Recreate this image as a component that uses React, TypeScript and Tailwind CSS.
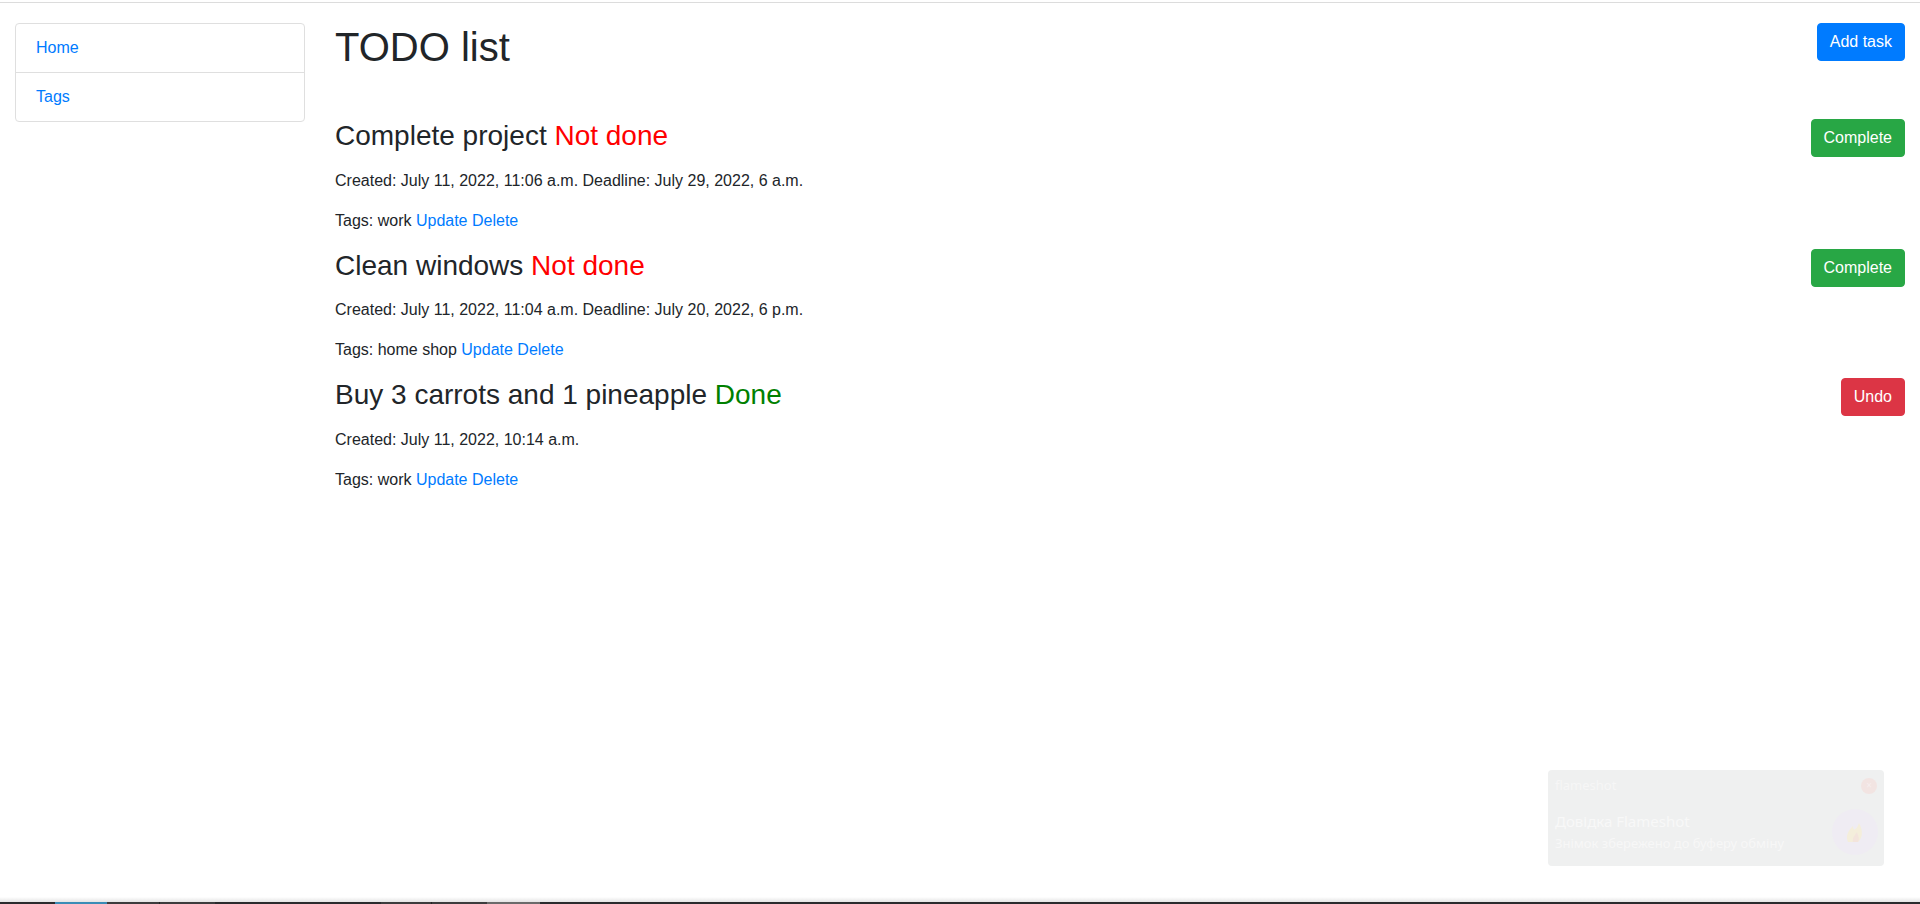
import { useState } from "react";

type Task = {
  id: number;
  title: string;
  done: boolean;
  created: string;
  deadline?: string;
  tags: string[];
};

const tasks: Task[] = [
  {
    id: 1,
    title: "Complete project",
    done: false,
    created: "July 11, 2022, 11:06 a.m.",
    deadline: "July 29, 2022, 6 a.m.",
    tags: ["work"],
  },
  {
    id: 2,
    title: "Clean windows",
    done: false,
    created: "July 11, 2022, 11:04 a.m.",
    deadline: "July 20, 2022, 6 p.m.",
    tags: ["home", "shop"],
  },
  {
    id: 3,
    title: "Buy 3 carrots and 1 pineapple",
    done: true,
    created: "July 11, 2022, 10:14 a.m.",
    tags: ["work"],
  },
];

function TaskItem({ task, onToggle }: { task: Task; onToggle: () => void }) {
  return (
    <div>
      <div className="flex items-start justify-between">
        <h3 className="text-[28px] leading-[1.2]">
          {task.title}{" "}
          {task.done ? (
            <span className="text-[#008000]">Done</span>
          ) : (
            <span className="text-[#ff0000]">Not done</span>
          )}
        </h3>
        {task.done ? (
          <button
            onClick={onToggle}
            className="h-[38px] rounded-[4px] border border-[#dc3545] bg-[#dc3545] px-3 text-base leading-6 text-white"
          >
            Undo
          </button>
        ) : (
          <button
            onClick={onToggle}
            className="h-[38px] rounded-[4px] border border-[#28a745] bg-[#28a745] px-3 text-base leading-6 text-white"
          >
            Complete
          </button>
        )}
      </div>
      <p className="mt-[11.5px] mb-4 text-base leading-6">
        Created: {task.created}
        {task.deadline && <> Deadline: {task.deadline}</>}
      </p>
      <p className="mb-4 text-base leading-6">
        Tags: {task.tags.join(" ")}{" "}
        <a href="#" className="text-[#007bff]">
          Update
        </a>{" "}
        <a href="#" className="text-[#007bff]">
          Delete
        </a>
      </p>
    </div>
  );
}

function FlameshotToast() {
  return (
    <div className="absolute top-[770px] left-[1548px] h-[96px] w-[336px] rounded-[4px] bg-[#eff0f0] font-['Noto_Sans',sans-serif]">
      <div className="flex items-center justify-between px-[7px] pt-[6px]">
        <span className="text-[13px] text-[#f6f6f6]">flameshot</span>
        <span className="flex h-[16px] w-[16px] items-center justify-center rounded-full bg-[#f2e4e2] text-[10px] text-[#f6eeee]">
          ×
        </span>
      </div>
      <div className="flex items-center justify-between px-[7px] pt-[12px]">
        <div className="flex flex-col">
          <span className="text-[15px] leading-[22px] text-[#f8f8f8]">
            Довідка Flameshot
          </span>
          <span className="text-[13px] leading-[22px] text-[#f7f7f7]">
            Знімок збережено до буферу обміну
          </span>
        </div>
        <svg width="48" height="48" viewBox="0 0 48 48" className="mr-[-2px]">
          <circle cx="24" cy="24" r="23" fill="#efecf3" />
          <path d="M17 34 C14 27 18 22 22 18 C22 23 25 23 28 15 C32 22 32 30 27 34 Z" fill="#f4eedb" />
          <path d="M22 34 C21 30 24 27 26 24 C27 28 29 30 27 34 Z" fill="#f3e4dc" />
        </svg>
      </div>
    </div>
  );
}

export default function App() {
  const [list, setList] = useState<Task[]>(tasks);

  const toggle = (id: number) =>
    setList(list.map((t) => (t.id === id ? { ...t, done: !t.done } : t)));

  return (
    <div className="relative flex h-screen flex-col overflow-hidden bg-white font-['Liberation_Sans',Arial,sans-serif] text-[#212529]">
      {/* browser edge */}
      <div className="h-[3px] border-b border-[#dcdcdc]" />

      <div className="flex flex-1 pt-5">
        {/* Sidebar */}
        <div className="w-[320px] px-[15px]">
          <div className="flex flex-col rounded-[4px] border border-[#dfdfdf]">
            <a href="#" className="px-5 py-3 text-base leading-6 text-[#007bff]">
              Home
            </a>
            <a href="#" className="border-t border-[#dfdfdf] px-5 py-3 text-base leading-6 text-[#007bff]">
              Tags
            </a>
          </div>
        </div>

        {/* Content */}
        <div className="flex-1 px-[15px]">
          <div className="mb-10 flex items-start justify-between">
            <h1 className="mb-2 text-[40px] leading-[1.2]">TODO list</h1>
            <button className="h-[38px] rounded-[4px] border border-[#007bff] bg-[#007bff] px-3 text-base leading-6 text-white">
              Add task
            </button>
          </div>
          {list.map((t) => (
            <TaskItem key={t.id} task={t} onToggle={() => toggle(t.id)} />
          ))}
        </div>
      </div>

      {/* taskbar edge */}
      <div className="h-[5px] bg-linear-to-b from-white to-[#e4e4e4]" />
      <div className="flex h-[2px] bg-[#2a2b2d]">
        <div className="ml-[55px] w-[52px] bg-[#3a8cb6]" />
        <div className="w-[53px] border-r border-[#222] bg-[#3c3c3d]" />
        <div className="w-[55px] bg-[#3c3c3d]" />
        <div className="ml-[166px] w-[51px] border-r border-[#222] bg-[#3c3c3d]" />
        <div className="w-[55px] bg-[#3c3c3d]" />
        <div className="w-[53px] bg-[#6a6a6a]" />
      </div>

      <FlameshotToast />
    </div>
  );
}
